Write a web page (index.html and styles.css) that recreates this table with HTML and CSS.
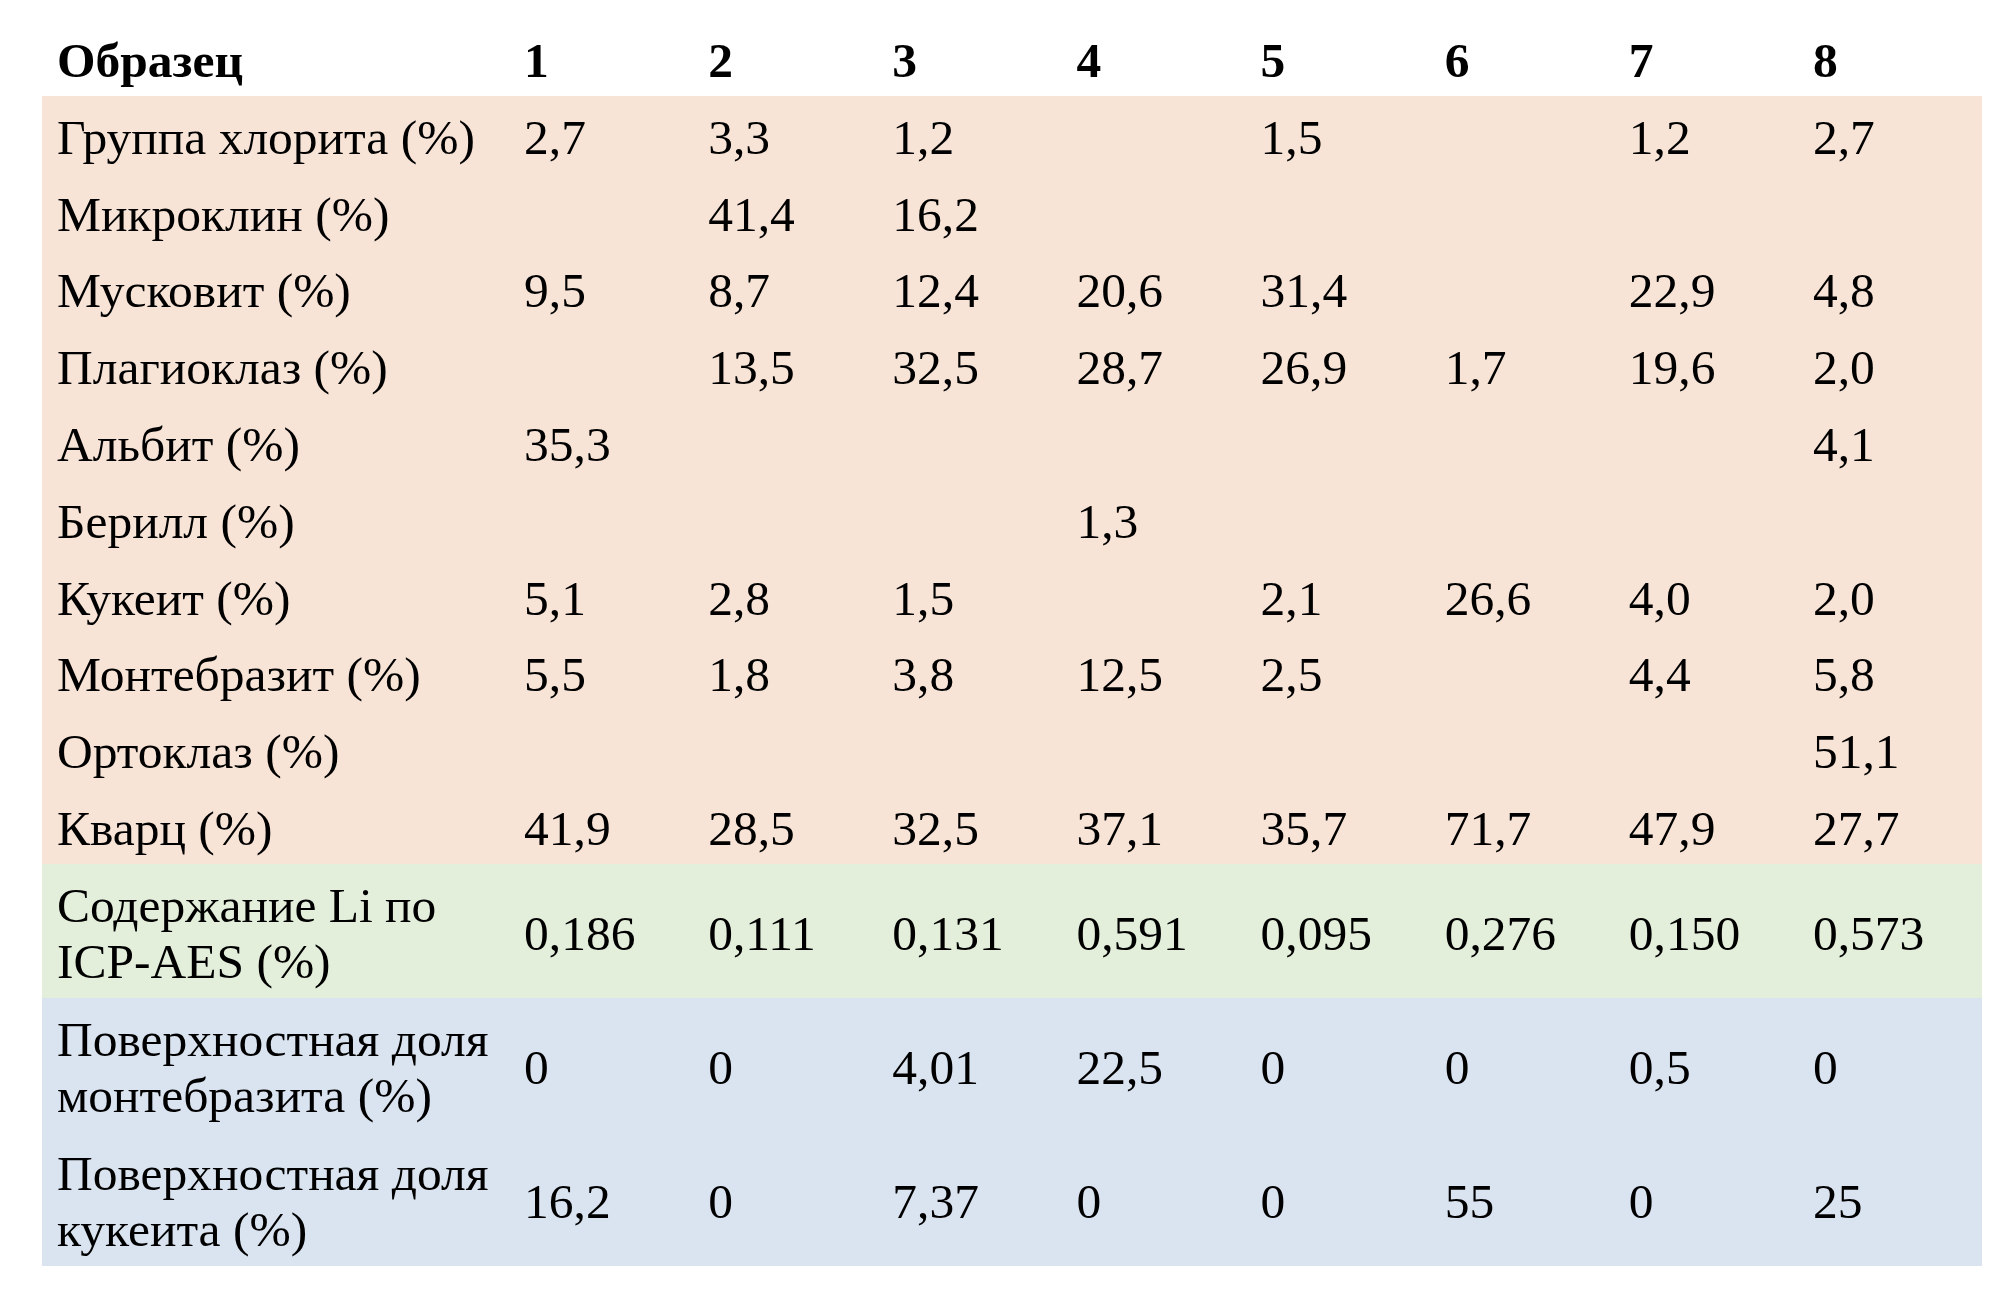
FILE: index.html
```html
<!DOCTYPE html>
<html lang="ru">
<head>
<meta charset="utf-8">
<title>Минеральный состав образцов</title>
<link rel="stylesheet" href="styles.css">
</head>
<body>
<table class="data">
  <colgroup>
    <col class="c-label">
    <col><col><col><col><col><col><col><col>
  </colgroup>
  <thead>
    <tr class="head">
      <th>Образец</th><th>1</th><th>2</th><th>3</th><th>4</th><th>5</th><th>6</th><th>7</th><th>8</th>
    </tr>
  </thead>
  <tbody>
    <tr class="min"><td>Группа хлорита (%)</td><td>2,7</td><td>3,3</td><td>1,2</td><td></td><td>1,5</td><td></td><td>1,2</td><td>2,7</td></tr>
    <tr class="min"><td>Микроклин (%)</td><td></td><td>41,4</td><td>16,2</td><td></td><td></td><td></td><td></td><td></td></tr>
    <tr class="min"><td>Мусковит (%)</td><td>9,5</td><td>8,7</td><td>12,4</td><td>20,6</td><td>31,4</td><td></td><td>22,9</td><td>4,8</td></tr>
    <tr class="min"><td>Плагиоклаз (%)</td><td></td><td>13,5</td><td>32,5</td><td>28,7</td><td>26,9</td><td>1,7</td><td>19,6</td><td>2,0</td></tr>
    <tr class="min"><td>Альбит (%)</td><td>35,3</td><td></td><td></td><td></td><td></td><td></td><td></td><td>4,1</td></tr>
    <tr class="min"><td>Берилл (%)</td><td></td><td></td><td></td><td>1,3</td><td></td><td></td><td></td><td></td></tr>
    <tr class="min"><td>Кукеит (%)</td><td>5,1</td><td>2,8</td><td>1,5</td><td></td><td>2,1</td><td>26,6</td><td>4,0</td><td>2,0</td></tr>
    <tr class="min"><td>Монтебразит (%)</td><td>5,5</td><td>1,8</td><td>3,8</td><td>12,5</td><td>2,5</td><td></td><td>4,4</td><td>5,8</td></tr>
    <tr class="min"><td>Ортоклаз (%)</td><td></td><td></td><td></td><td></td><td></td><td></td><td></td><td>51,1</td></tr>
    <tr class="min"><td>Кварц (%)</td><td>41,9</td><td>28,5</td><td>32,5</td><td>37,1</td><td>35,7</td><td>71,7</td><td>47,9</td><td>27,7</td></tr>
    <tr class="li two"><td>Содержание Li по<br>ICP-AES (%)</td><td>0,186</td><td>0,111</td><td>0,131</td><td>0,591</td><td>0,095</td><td>0,276</td><td>0,150</td><td>0,573</td></tr>
    <tr class="surf two"><td>Поверхностная доля<br>монтебразита (%)</td><td>0</td><td>0</td><td>4,01</td><td>22,5</td><td>0</td><td>0</td><td>0,5</td><td>0</td></tr>
    <tr class="surf two"><td>Поверхностная доля<br>кукеита (%)</td><td>16,2</td><td>0</td><td>7,37</td><td>0</td><td>0</td><td>55</td><td>0</td><td>25</td></tr>
  </tbody>
</table>
</body>
</html>
```
FILE: styles.css
```css
html, body {
  margin: 0;
  background: #ffffff;
}
body {
  padding: 19px 0 0 42px;
  font-family: "Liberation Serif", "Times New Roman", serif;
  font-size: 49.5px;
  color: #000000;
}
.data {
  border-collapse: collapse;
  border-spacing: 0;
  table-layout: fixed;
  width: 1940px;
}
.c-label {
  width: 467px;
}
.data th,
.data td {
  padding: 14px 4px 6.8px 15px;
  line-height: 56px;
  text-align: left;
  vertical-align: middle;
  white-space: nowrap;
  font-weight: normal;
}
.head th {
  font-weight: bold;
}
.min td {
  background: #f8e4d7;
}
.two td {
  padding-bottom: 8px;
}
.li td {
  background: #e3efda;
}
.surf td {
  background: #dae3f0;
}
```
